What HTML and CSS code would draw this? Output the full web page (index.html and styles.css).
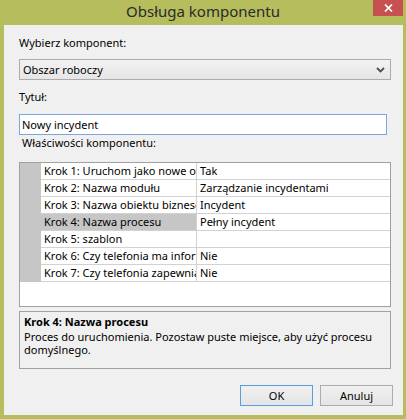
FILE: index.html
```html
<!DOCTYPE html>
<html lang="pl">
<head>
<meta charset="utf-8">
<title>Obsługa komponentu</title>
<link rel="stylesheet" href="styles.css">
</head>
<body>
<div class="window">
  <div class="titlebar">
    <span class="title">Obsługa komponentu</span>
    <span class="close"><svg width="9" height="8" viewBox="0 0 9 8"><path d="M1 0.5 L8 7.5 M8 0.5 L1 7.5" stroke="#fff" stroke-width="1.7" fill="none"/></svg></span>
  </div>
  <div class="client">
    <div class="label">Wybierz komponent:</div>
    <div class="combo">
      <span class="combo-text">Obszar roboczy</span>
      <svg class="chev" width="9" height="6" viewBox="0 0 9 6"><path d="M1 1 L4.5 4.5 L8 1" stroke="#4d4d4d" stroke-width="1.8" fill="none"/></svg>
    </div>
    <div class="label gap9">Tytuł:</div>
    <div class="textbox">Nowy incydent</div>
    <div class="label indent">Właściwości komponentu:</div>
    <div class="grid">
      <div class="row"><div class="margin"></div><div class="name">Krok 1: Uruchom jako nowe okno</div><div class="value">Tak</div></div>
      <div class="row"><div class="margin"></div><div class="name">Krok 2: Nazwa modułu</div><div class="value">Zarządzanie incydentami</div></div>
      <div class="row"><div class="margin"></div><div class="name">Krok 3: Nazwa obiektu biznesowego</div><div class="value">Incydent</div></div>
      <div class="row sel"><div class="margin"></div><div class="name">Krok 4: Nazwa procesu</div><div class="value">Pełny incydent</div></div>
      <div class="row"><div class="margin"></div><div class="name">Krok 5: szablon</div><div class="value"></div></div>
      <div class="row"><div class="margin"></div><div class="name">Krok 6: Czy telefonia ma informacje</div><div class="value">Nie</div></div>
      <div class="row"><div class="margin"></div><div class="name">Krok 7: Czy telefonia zapewnia</div><div class="value">Nie</div></div>
    </div>
    <div class="desc">
      <div class="desc-title">Krok 4: Nazwa procesu</div>
      <div class="desc-text">Proces do uruchomienia. Pozostaw puste miejsce, aby użyć procesu<br>domyślnego.</div>
    </div>
    <div class="buttons">
      <div class="btn default">OK</div>
      <div class="btn">Anuluj</div>
    </div>
  </div>
</div>
</body>
</html>
```
FILE: styles.css
```css
html, body {
  margin: 0;
  padding: 0;
}
body {
  width: 406px;
  height: 419px;
  overflow: hidden;
  background: #b5bd5d;
  font-family: "Noto Sans", "Open Sans", sans-serif;
  font-size: 11px;
  color: #000;
}
.window {
  height: 419px;
  display: flex;
  flex-direction: column;
}
.titlebar {
  position: relative;
  height: 25px;
  flex: none;
  display: flex;
  justify-content: center;
  align-items: flex-start;
}
.title {
  font-size: 15px;
  line-height: 22px;
  color: #2b2b2b;
}
.close {
  position: absolute;
  top: 0;
  right: 3px;
  width: 30px;
  height: 16px;
  background: #c75050;
  display: flex;
  align-items: center;
  justify-content: center;
}
.client {
  flex: 1;
  margin: 0 3px 4px 4px;
  background: #f0f0f0;
  padding: 10px 12px 0 15px;
  display: flex;
  flex-direction: column;
}
.label {
  height: 15px;
  line-height: 15px;
  white-space: nowrap;
}
.gap9 {
  margin-top: 9px;
}
.indent {
  padding-left: 3px;
}
.combo {
  margin-top: 9px;
  height: 21px;
  box-sizing: border-box;
  border: 1px solid #acacac;
  background: linear-gradient(#f2f2f2, #e6e6e6);
  display: flex;
  align-items: center;
  padding: 0 5px 0 3px;
}
.combo-text {
  line-height: 19px;
}
.chev {
  margin-left: auto;
}
.textbox {
  margin-top: 10px;
  width: 368px;
  height: 21px;
  box-sizing: border-box;
  border: 1px solid #7aa7dd;
  background: #fff;
  padding-left: 2px;
  line-height: 19px;
}
.grid {
  margin-top: 12px;
  height: 145px;
  box-sizing: border-box;
  border: 1px solid #a0a0a0;
  background: #fff;
  display: flex;
  flex-direction: column;
}
.row {
  display: grid;
  grid-template-columns: 21px 156px 1fr;
  height: 17px;
}
.margin {
  background: #c6c6c6;
}
.name, .value {
  box-sizing: border-box;
  border-bottom: 1px solid #d2d2d2;
  padding-left: 3px;
  line-height: 16px;
  white-space: nowrap;
  overflow: hidden;
}
.name {
  border-right: 1px solid #d2d2d2;
}
.row.sel .name {
  background: #c6c6c6;
}
.desc {
  margin-top: 4px;
  height: 58px;
  box-sizing: border-box;
  border: 1px solid #a0a0a0;
  padding: 3px 4px 0 4px;
}
.desc-title {
  font-weight: bold;
  line-height: 14px;
}
.desc-text {
  margin-top: 1px;
  line-height: 13px;
}
.buttons {
  margin-top: 16px;
  margin-right: -2px;
  display: flex;
  justify-content: flex-end;
  gap: 7px;
}
.btn {
  width: 73px;
  height: 21px;
  box-sizing: border-box;
  border: 1px solid #acacac;
  background: linear-gradient(#f0f0f0, #e5e5e5);
  text-align: center;
  line-height: 19px;
}
.btn.default {
  border-color: #5a9ee0;
}
```
